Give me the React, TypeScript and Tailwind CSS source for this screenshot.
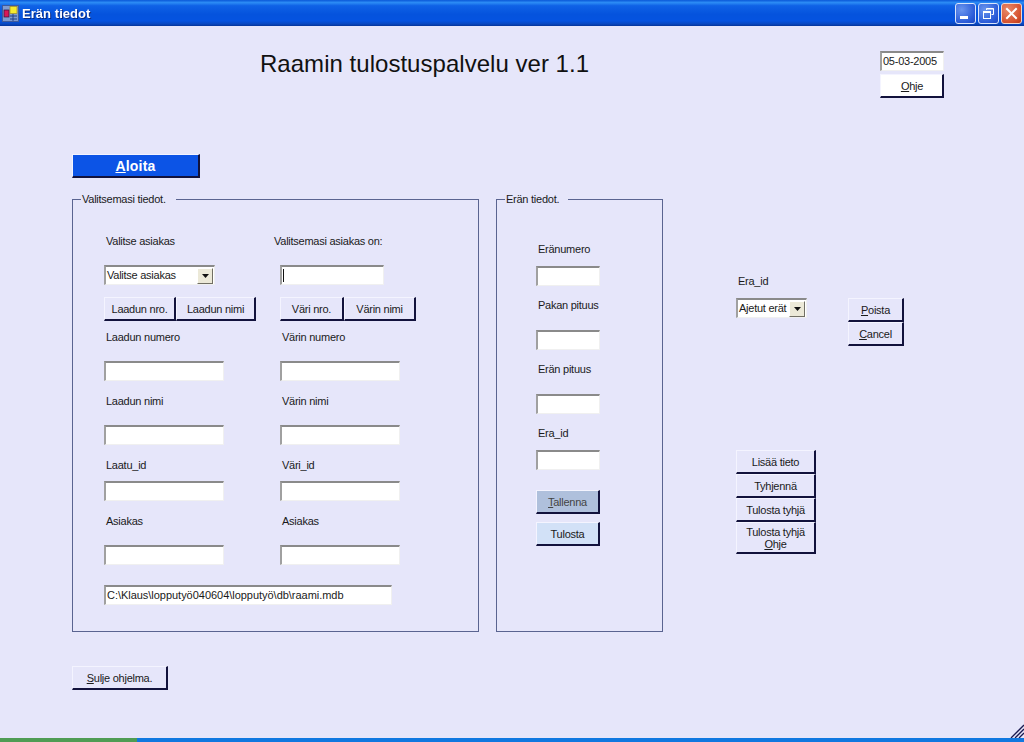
import React from "react";

const btnBase =
  "flex items-center justify-center border-t border-l border-t-[#f4f4ff] border-l-[#f4f4ff] border-r-2 border-b-2 border-r-[#12123c] border-b-[#12123c] leading-[12px] text-center text-[#1a1a1a]";

function Btn({ className = "", children }: { className?: string; children: React.ReactNode }) {
  return <div className={`${btnBase} ${className}`}>{children}</div>;
}

function Field({ className = "", children }: { className?: string; children?: React.ReactNode }) {
  return (
    <div
      className={`flex items-center bg-white border-t-2 border-l-2 border-t-[#8a8a8a] border-l-[#a0a0a0] border-r border-b border-r-[#f0f0f0] border-b-[#f0f0f0] pl-[1px] text-[#1a1a1a] whitespace-nowrap ${className}`}
    >
      {children}
    </div>
  );
}

function Combo({ text, className = "" }: { text: string; className?: string }) {
  return (
    <Field className={`justify-between h-[20px] ${className}`}>
      <span>{text}</span>
      <span className="flex items-center justify-center w-[16px] h-[16px] mr-[1px] bg-[#ece9d8] border-r border-b border-r-[#716f64] border-b-[#716f64] border-t border-l border-t-white border-l-white">
        <svg width="7" height="4" viewBox="0 0 7 4">
          <path d="M0 0h7L3.5 4z" fill="#111" />
        </svg>
      </span>
    </Field>
  );
}

function Label({ children, className = "" }: { children: React.ReactNode; className?: string }) {
  return <div className={`h-[16px] leading-[16px] text-[#1a1a1a] whitespace-nowrap ${className}`}>{children}</div>;
}

export default function App() {
  return (
    <div
      className="flex flex-col w-[1024px] h-[742px] overflow-hidden bg-[#e6e6fa] text-[11px] tracking-[-0.25px] relative"
      style={{ fontFamily: '"Liberation Sans", Arial, sans-serif' }}
    >
      {/* Title bar */}
      <div className="flex items-center h-[26px] shrink-0 bg-[linear-gradient(180deg,#0a58d8_0%,#2c8cf5_10%,#0f62e6_22%,#0553dd_55%,#0553e0_80%,#0a48c0_92%,#04349a_100%)] pl-[2px] pr-[2px]">
        <svg width="17" height="17" viewBox="0 0 17 17" className="mr-[3px]">
          <rect x="0.5" y="0.5" width="16" height="16" fill="#7f9bd0" stroke="#3f5a9a" />
          <rect x="2" y="5" width="5" height="7" fill="#d81858" stroke="#301040" strokeWidth="0.7" />
          <rect x="8" y="1.5" width="7" height="7" fill="#f5ea30" stroke="#a08a20" strokeWidth="0.7" />
          <path d="M8 11h7M8 14h7M11 9v7" stroke="#22408a" strokeWidth="1" fill="none" />
        </svg>
        <span className="text-white font-bold text-[13px] tracking-[0.05px] leading-none drop-shadow-[1px_1px_0_#0a2a80]">
          Erän tiedot
        </span>
        <div className="ml-auto flex gap-[2px]">
          <div className="w-[21px] h-[21px] rounded-[3px] border border-[#d8e4fb] bg-[radial-gradient(circle_at_30%_30%,#6a95ee,#2a5bd8_70%,#1e48c0)] flex items-end pl-[4px] pb-[4px]">
            <div className="w-[8px] h-[3px] bg-white" />
          </div>
          <div className="w-[21px] h-[21px] rounded-[3px] border border-[#d8e4fb] bg-[radial-gradient(circle_at_30%_30%,#6a95ee,#2a5bd8_70%,#1e48c0)] flex items-center justify-center">
            <svg width="13" height="13" viewBox="0 0 13 13" fill="none" stroke="#fff">
              <path d="M4.5 3V1.5h7v6H9.5" />
              <path d="M4.5 2h7" strokeWidth="1" />
              <rect x="1.5" y="4.5" width="7" height="7" />
              <path d="M1.5 5.5h7" />
            </svg>
          </div>
          <div className="w-[21px] h-[21px] rounded-[3px] border border-[#f0d8d0] bg-[radial-gradient(circle_at_30%_30%,#e88a6a,#d5512e_70%,#b83a18)] flex items-center justify-center">
            <svg width="13" height="13" viewBox="0 0 13 13" stroke="#fff" strokeWidth="2" strokeLinecap="square">
              <path d="M2 2l9 9M11 2l-9 9" />
            </svg>
          </div>
        </div>
      </div>

      {/* Body */}
      <div className="flex-1 flex flex-col">
        {/* Header */}
        <div className="flex h-[128px] shrink-0">
          <div className="ml-[260px] mt-[23px] text-[24px] leading-[30px] tracking-[0.03px] text-[#111] whitespace-nowrap">
            Raamin tulostuspalvelu ver 1.1
          </div>
          <div className="ml-auto mr-[80px] w-[64px] mt-[25px] flex flex-col">
            <Field className="h-[20px] w-[64px] !pl-[1px]">05-03-2005</Field>
            <Btn className="h-[24px] mt-[3px] bg-white">
              <span className="pl-[1px]">
                <u>O</u>hje
              </span>
            </Btn>
          </div>
        </div>

        <Btn className="ml-[72px] w-[128px] h-[24px] bg-[#0c54e6] !text-white font-bold text-[14px] tracking-[0.2px] shrink-0">
          <span>
            <u>A</u>loita
          </span>
        </Btn>

        {/* Main row */}
        <div className="flex mt-[13px] ml-[72px] h-[441px] shrink-0">
          <fieldset className="w-[407px] border border-[#5a6490] pl-[31px] h-[441px] flex flex-col">
            <legend className="-ml-[23px] pl-[1px] pr-[10px] leading-[16px] h-[16px] text-[#1a1a1a]">Valitsemasi tiedot.</legend>
            <div className="flex mt-[26px]">
              <div className="w-[176px]">
                <Label className="pl-[2px]">Valitse asiakas</Label>
                <Combo text="Valitse asiakas" className="mt-[16px] w-[111px]" />
                <div className="flex mt-[12px]">
                  <Btn className="w-[72px] h-[24px]">Laadun nro.</Btn>
                  <Btn className="w-[80px] h-[24px]">Laadun nimi</Btn>
                </div>
              </div>
              <div>
                <Label className="-ml-[6px]">Valitsemasi asiakas on:</Label>
                <Field className="mt-[16px] w-[104px] h-[20px]">
                  <span className="w-px h-[13px] bg-[#111]" />
                </Field>
                <div className="flex mt-[12px]">
                  <Btn className="w-[64px] h-[24px]">Väri nro.</Btn>
                  <Btn className="w-[72px] h-[24px]">Värin nimi</Btn>
                </div>
              </div>
            </div>

            <div className="flex mt-[8px]">
              <div className="w-[176px]">
                <Label className="pl-[2px]">Laadun numero</Label>
                <Field className="mt-[16px] w-[120px] h-[20px]" />
                <Label className="pl-[2px] mt-[12px]">Laadun nimi</Label>
                <Field className="mt-[16px] w-[120px] h-[20px]" />
                <Label className="pl-[2px] mt-[12px]">Laatu_id</Label>
                <Field className="mt-[8px] w-[120px] h-[20px]" />
                <Label className="pl-[2px] mt-[12px]">Asiakas</Label>
                <Field className="mt-[16px] w-[120px] h-[20px]" />
              </div>
              <div>
                <Label className="pl-[2px]">Värin numero</Label>
                <Field className="mt-[16px] w-[120px] h-[20px]" />
                <Label className="pl-[2px] mt-[12px]">Värin nimi</Label>
                <Field className="mt-[16px] w-[120px] h-[20px]" />
                <Label className="pl-[2px] mt-[12px]">Väri_id</Label>
                <Field className="mt-[8px] w-[120px] h-[20px]" />
                <Label className="pl-[2px] mt-[12px]">Asiakas</Label>
                <Field className="mt-[16px] w-[120px] h-[20px]" />
              </div>
            </div>

            <Field className="mt-[20px] w-[288px] h-[20px] tracking-[-0.03px]">C:\Klaus\lopputyö040604\lopputyö\db\raami.mdb</Field>
          </fieldset>

          <fieldset className="ml-[17px] w-[167px] border border-[#5a6490] pl-[39px] h-[441px] flex flex-col">
            <legend className="-ml-[31px] pl-[1px] pr-[9px] leading-[16px] h-[16px] text-[#1a1a1a]">Erän tiedot.</legend>
            <Label className="mt-[34px] pl-[2px]">Eränumero</Label>
            <Field className="mt-[9px] w-[64px] h-[20px]" />
            <Label className="mt-[11px] pl-[2px]">Pakan pituus</Label>
            <Field className="mt-[17px] w-[64px] h-[20px]" />
            <Label className="mt-[11px] pl-[2px]">Erän pituus</Label>
            <Field className="mt-[17px] w-[64px] h-[20px]" />
            <Label className="mt-[11px] pl-[2px]">Era_id</Label>
            <Field className="mt-[9px] w-[64px] h-[20px]" />
            <Btn className="mt-[20px] w-[64px] h-[24px] bg-[#afc0dc] !text-[#444]">
              <span>
                <u>T</u>allenna
              </span>
            </Btn>
            <Btn className="mt-[8px] w-[64px] h-[24px] bg-[#d2e1f7]">Tulosta</Btn>
          </fieldset>

          <div className="ml-[73px] flex flex-col">
            <div className="flex mt-[82px]">
              <div className="w-[112px]">
                <Label className="pl-[2px]">Era_id</Label>
                <Combo text="Ajetut erät" className="mt-[9px] w-[71px]" />
              </div>
              <div className="flex flex-col mt-[25px]">
                <Btn className="w-[56px] h-[24px]">
                  <span>
                    <u>P</u>oista
                  </span>
                </Btn>
                <Btn className="w-[56px] h-[24px]">
                  <span>
                    <u>C</u>ancel
                  </span>
                </Btn>
              </div>
            </div>
            <div className="flex flex-col mt-[104px] w-[80px]">
              <Btn className="h-[24px]">Lisää tieto</Btn>
              <Btn className="h-[24px]">Tyhjennä</Btn>
              <Btn className="h-[24px]">Tulosta tyhjä</Btn>
              <Btn className="h-[32px]">
                <span>
                  Tulosta tyhjä
                  <br />
                  <u>O</u>hje
                </span>
              </Btn>
            </div>
          </div>
        </div>

        <Btn className="ml-[72px] mt-[34px] w-[96px] h-[24px] shrink-0">
          <span>
            <u>S</u>ulje ohjelma.
          </span>
        </Btn>
      </div>

      {/* Bottom strip */}
      <div className="flex h-[4px] shrink-0">
        <div className="w-[137px] bg-[#4f9c54]" />
        <div className="flex-1 bg-[#1078e0]" />
      </div>

      {/* Resize grip */}
      <svg width="14" height="14" viewBox="0 0 14 14" className="absolute right-0 bottom-[4px]" stroke="#1a1a50" strokeWidth="1.3">
        <path d="M1 14L14 1M5 14L14 5M9 14L14 9" />
      </svg>
    </div>
  );
}
